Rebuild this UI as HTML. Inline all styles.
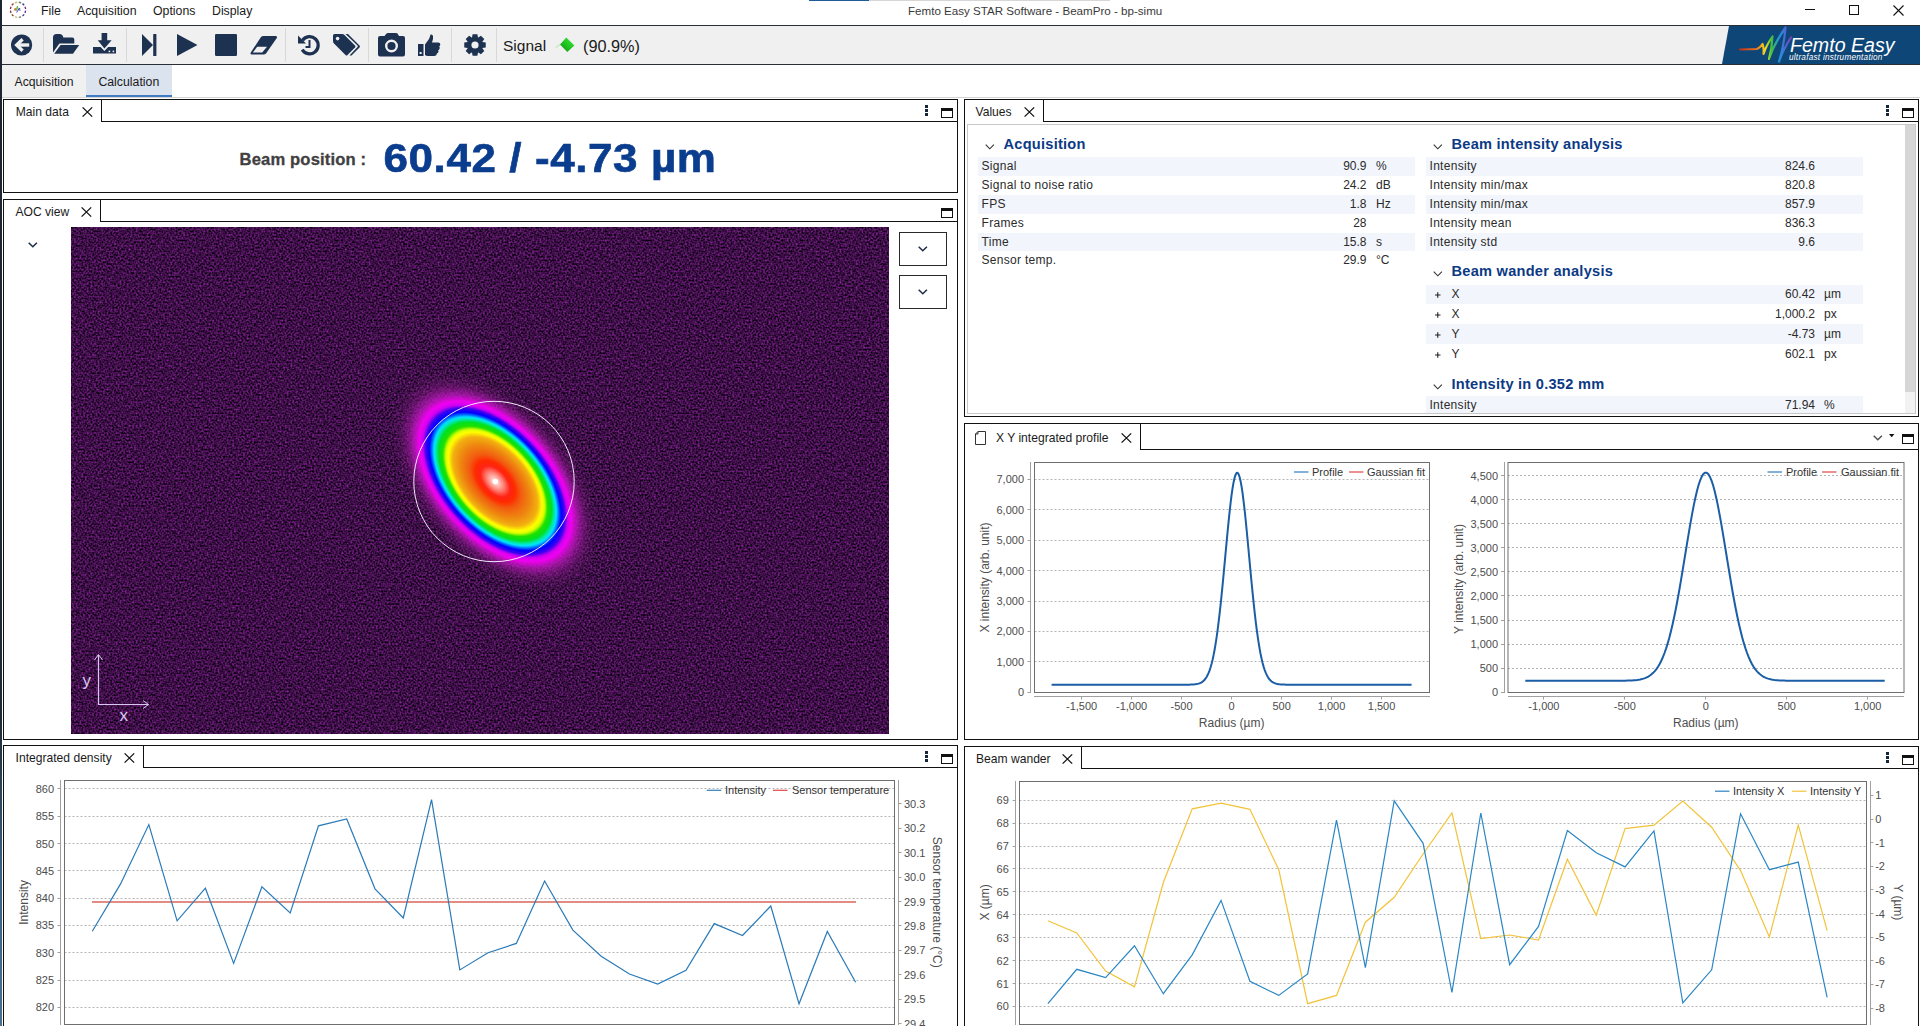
<!DOCTYPE html>
<html><head><meta charset="utf-8"><title>Femto Easy STAR Software - BeamPro</title>
<style>
html,body{margin:0;padding:0;}
body{width:1920px;height:1026px;overflow:hidden;position:relative;background:#fff;font-family:"Liberation Sans", sans-serif;}
.t{position:absolute;white-space:pre;line-height:1;}
.r{position:absolute;}
svg{position:absolute;overflow:visible;}
</style></head><body>

<div class="r" style="left:809px;top:0px;width:60px;height:1px;background:#1f5b98;"></div>
<div class="r" style="left:869px;top:0px;width:241px;height:1px;background:#d6d6d6;"></div>
<svg style="left:8px;top:0px" width="20" height="20" viewBox="0 0 20 20"><path d="M17.56 10.59 A7.6 7.6 0 0 1 16.94 12.89" stroke="#5a2d82" stroke-width="1.3" fill="none"/><path d="M16.15 14.27 A7.6 7.6 0 0 1 14.47 15.95" stroke="#4a3a8a" stroke-width="1.3" fill="none"/><path d="M13.09 16.74 A7.6 7.6 0 0 1 10.79 17.36" stroke="#5a8070" stroke-width="1.3" fill="none"/><path d="M9.21 17.36 A7.6 7.6 0 0 1 6.91 16.74" stroke="#c8b870" stroke-width="1.3" fill="none"/><path d="M5.53 15.95 A7.6 7.6 0 0 1 3.85 14.27" stroke="#8a4a30" stroke-width="1.3" fill="none"/><path d="M3.06 12.89 A7.6 7.6 0 0 1 2.44 10.59" stroke="#8a2a2a" stroke-width="1.3" fill="none"/><path d="M2.44 9.01 A7.6 7.6 0 0 1 3.06 6.71" stroke="#8a2a2a" stroke-width="1.3" fill="none"/><path d="M3.85 5.33 A7.6 7.6 0 0 1 5.53 3.65" stroke="#8a4a30" stroke-width="1.3" fill="none"/><path d="M6.91 2.86 A7.6 7.6 0 0 1 9.21 2.24" stroke="#c8b870" stroke-width="1.3" fill="none"/><path d="M10.79 2.24 A7.6 7.6 0 0 1 13.09 2.86" stroke="#5a8070" stroke-width="1.3" fill="none"/><path d="M14.47 3.65 A7.6 7.6 0 0 1 16.15 5.33" stroke="#4a3a8a" stroke-width="1.3" fill="none"/><path d="M16.94 6.71 A7.6 7.6 0 0 1 17.56 9.01" stroke="#5a2d82" stroke-width="1.3" fill="none"/><path d="M6.2 10.5 L7.2 8.2 L8 10.8" fill="none" stroke="#c07828" stroke-width="1"/><path d="M8 10.8 L9.4 6.2 L10.2 10" fill="none" stroke="#60b040" stroke-width="1"/><path d="M8.6 12.5 L10.2 10 L11.5 8 L12 10.8" fill="none" stroke="#5040b0" stroke-width="1"/></svg>
<div class="t" style="left:41px;top:4.59px;font-size:12.3px;color:#1a1a1a;font-weight:normal;">File</div>
<div class="t" style="left:77px;top:4.59px;font-size:12.3px;color:#1a1a1a;font-weight:normal;">Acquisition</div>
<div class="t" style="left:153px;top:4.59px;font-size:12.3px;color:#1a1a1a;font-weight:normal;">Options</div>
<div class="t" style="left:212px;top:4.59px;font-size:12.3px;color:#1a1a1a;font-weight:normal;">Display</div>
<div class="t" style="left:908px;top:5.18px;font-size:11.6px;color:#3a3a3a;font-weight:normal;">Femto Easy STAR Software - BeamPro - bp-simu</div>
<div class="r" style="left:1805px;top:9px;width:10px;height:1px;background:#111;"></div>
<div class="r" style="left:1849px;top:5px;width:8px;height:8px;background:transparent;border:1px solid #111;"></div>
<svg style="left:1893px;top:5px" width="11" height="11" viewBox="0 0 11 11"><path d="M0.5 0.5 L10.5 10.5 M10.5 0.5 L0.5 10.5" stroke="#111" stroke-width="1.1"/></svg>
<div class="r" style="left:2px;top:25px;width:1918px;height:1px;background:#2a2f36;"></div>
<div class="r" style="left:2px;top:26px;width:1918px;height:38px;background:#f0f0f0;"></div>
<div class="r" style="left:2px;top:64px;width:1918px;height:1px;background:#2a2f36;"></div>
<div class="r" style="left:43px;top:28px;width:1px;height:34px;background:#d8d8d8;"></div>
<div class="r" style="left:126px;top:28px;width:1px;height:34px;background:#d8d8d8;"></div>
<div class="r" style="left:285px;top:28px;width:1px;height:34px;background:#d8d8d8;"></div>
<div class="r" style="left:368px;top:28px;width:1px;height:34px;background:#d8d8d8;"></div>
<div class="r" style="left:451px;top:28px;width:1px;height:34px;background:#d8d8d8;"></div>
<div class="r" style="left:496px;top:28px;width:1px;height:34px;background:#d8d8d8;"></div>
<svg style="left:11px;top:34px" width="22" height="22" viewBox="0 0 22 22"><circle cx="10.6" cy="11" r="10.6" fill="#1d3150"/><path d="M11.6 5.2 L5.6 11 L11.6 16.8" fill="none" stroke="#f0f0f0" stroke-width="3.3" stroke-linejoin="miter"/><path d="M7.5 11 L18.2 11" stroke="#f0f0f0" stroke-width="3.4"/></svg>
<svg style="left:53px;top:34px" width="27" height="21" viewBox="0 0 27 21"><path d="M0 3.5 Q0 0 3.5 0 L6.5 0 Q9.8 0 10.3 3.6 L19.3 3.6 Q21.3 3.6 21.3 5.6 L21.3 9.6 L6.4 9.6 L0 18.6 Z" fill="#1d3150"/><path d="M7.6 11 L26.2 11 L20 19.8 L1.2 19.8 Z" fill="#1d3150"/></svg>
<svg style="left:93px;top:33px" width="24" height="22" viewBox="0 0 24 22"><path d="M8.6 0 L14.2 0 L14.2 7.2 L18.6 7.2 L11.4 15.6 L4.8 7.2 L8.6 7.2 Z" fill="#1d3150"/><path d="M0 14 L7.6 14 L11.4 18 L15.2 14 L23 14 L23 20.6 L0 20.6 Z" fill="#1d3150"/><rect x="15.6" y="17.6" width="1.6" height="1.6" fill="#f0f0f0"/><rect x="19.6" y="17.6" width="1.6" height="1.6" fill="#f0f0f0"/></svg>
<svg style="left:142px;top:34px" width="15" height="22" viewBox="0 0 15 22"><path d="M0 0 L11 11 L0 22 Z" fill="#1d3150"/><rect x="11.2" y="0" width="3.2" height="22" rx="0.6" fill="#1d3150"/></svg>
<svg style="left:177px;top:34px" width="21" height="22" viewBox="0 0 21 22"><path d="M0 0 L20.5 11 L0 22 Z" fill="#1d3150"/></svg>
<svg style="left:215px;top:34px" width="22" height="22" viewBox="0 0 22 22"><rect x="0" y="0" width="22" height="22" rx="1.2" fill="#1d3150"/></svg>
<svg style="left:250px;top:36px" width="28" height="19" viewBox="0 0 28 19"><path d="M11 1 Q12 0 13.5 0 L26 0 Q27.5 0.5 26.8 2 L16 17.5 Q15 18.5 13.5 18.5 L1.5 18.5 Q0 18 0.8 16.5 Z" fill="#1d3150"/><path d="M7.2 10.8 L17 10.8 L12.2 16.6 L2.8 16.6 Z" fill="#f0f0f0"/></svg>
<svg style="left:298px;top:34px" width="22" height="22" viewBox="0 0 22 22"><path d="M4.6 6.2 A8.6 8.6 0 1 1 4.2 15.6" fill="none" stroke="#1d3150" stroke-width="3.2"/><path d="M0 1.5 L0 9.5 L8 9.5 Z" fill="#1d3150"/><path d="M11.5 6 L11.5 13 L7.5 13" fill="none" stroke="#1d3150" stroke-width="2"/></svg>
<svg style="left:333px;top:34px" width="28" height="22" viewBox="0 0 28 22"><path d="M0 1.5 Q0 0 1.5 0 L9 0 Q10.5 0 11.5 1 L22 11.5 Q23 12.5 22 13.5 L14.5 21 Q13.5 22 12.5 21 L1 9.5 Q0 8.5 0 7 Z" fill="#1d3150"/><circle cx="4.6" cy="4.6" r="1.8" fill="#f0f0f0"/><path d="M12.5 0 L15 0 L26.5 11.5 Q27.5 12.5 26.5 13.5 L18.5 21.5 L16.5 21.5 L24.5 13 Q25.3 12.3 24.5 11.5 Z" fill="#1d3150"/></svg>
<svg style="left:378px;top:33px" width="28" height="24" viewBox="0 0 28 24"><path d="M8.5 0.5 Q9 0 10 0 L18 0 Q19 0 19.5 0.5 L21 3 L25 3 Q27 3 27 5 L27 21.5 Q27 23.5 25 23.5 L2 23.5 Q0 23.5 0 21.5 L0 5 Q0 3 2 3 L6.5 3 Z" fill="#1d3150"/><circle cx="13.5" cy="13" r="5.3" fill="none" stroke="#f0f0f0" stroke-width="2.4"/></svg>
<svg style="left:418px;top:34px" width="23" height="22" viewBox="0 0 23 22"><rect x="0" y="10" width="5.5" height="12" fill="#1d3150"/><rect x="1.6" y="18" width="2" height="2" fill="#f0f0f0"/><path d="M7 10.5 L11 5 Q12 2.5 12.5 0.5 Q14.5 0 15 2 Q15.5 4.5 14 8.5 L20.5 8.5 Q22.5 8.8 22.3 10.8 Q22 12 21.2 12.5 Q22.3 13.5 21.5 15 Q21 15.8 20.2 16.2 Q21 17.5 20 18.8 Q19.4 19.4 18.8 19.6 Q19 21.8 16.5 22 L10 22 Q8 22 7 21 Z" fill="#1d3150"/></svg>
<svg style="left:464px;top:34px" width="22" height="22" viewBox="0 0 22 22"><path d="M21.73 8.60 L21.73 13.40 L18.18 14.04 L18.23 13.93 L20.29 16.89 L16.89 20.29 L13.93 18.23 L14.04 18.18 L13.40 21.73 L8.60 21.73 L7.96 18.18 L8.07 18.23 L5.11 20.29 L1.71 16.89 L3.77 13.93 L3.82 14.04 L0.27 13.40 L0.27 8.60 L3.82 7.96 L3.77 8.07 L1.71 5.11 L5.11 1.71 L8.07 3.77 L7.96 3.82 L8.60 0.27 L13.40 0.27 L14.04 3.82 L13.93 3.77 L16.89 1.71 L20.29 5.11 L18.23 8.07 L18.18 7.96 Z" fill="#1d3150"/><circle cx="11" cy="11" r="3.6" fill="#f0f0f0"/></svg>
<div class="t" style="left:503px;top:38.18px;font-size:15.5px;color:#1a1a1a;font-weight:normal;">Signal</div>
<svg style="left:554px;top:36px" width="24" height="18" viewBox="0 0 24 18"><defs><linearGradient id="dg" x1="0" y1="1" x2="1" y2="0"><stop offset="0" stop-color="#168a16"/><stop offset="0.55" stop-color="#22cc22"/><stop offset="1" stop-color="#4ae04a"/></linearGradient></defs><path d="M1.8 11.6 L6 8.4" stroke="#c8e8c8" stroke-width="1.4"/><path d="M12.3 1.6 L20.4 9.4 L13.3 16 L6 8.4 Z" fill="url(#dg)"/></svg>
<div class="t" style="left:583px;top:37.50px;font-size:16.3px;color:#1a1a1a;font-weight:normal;">(90.9%)</div>
<svg style="left:1722px;top:26px" width="198" height="38" viewBox="0 0 198 38"><path d="M7 0 L198 0 L198 38 L0 38 Z" fill="#0e4677"/><defs><linearGradient id="lg" x1="0" y1="0" x2="1" y2="0"><stop offset="0" stop-color="#c03020"/><stop offset="0.35" stop-color="#f08020"/><stop offset="0.5" stop-color="#f0e020"/><stop offset="0.62" stop-color="#40c040"/><stop offset="0.78" stop-color="#2090e0"/><stop offset="1" stop-color="#8040c0"/></linearGradient></defs><path d="M18 23.5 L35 23 Q38 22 40.5 18 Q42 22 41.5 28 Q44 20 50.5 10.5 Q50 22 47 33 Q52 18 63.5 1.5 Q62 20 57 35.5 Q62 22 69 11.5" fill="none" stroke="url(#lg)" stroke-width="2.2" stroke-linejoin="round" stroke-linecap="round"/></svg>
<div class="t" style="left:1790px;top:36.41px;font-size:19.6px;color:#ffffff;font-weight:normal;font-style:italic;letter-spacing:0px;">Femto Easy</div>
<div class="t" style="left:1789px;top:54.36px;font-size:8.2px;color:#ffffff;font-weight:normal;font-style:italic;letter-spacing:0.25px;">ultrafast instrumentation</div>
<div class="r" style="left:2px;top:65px;width:84px;height:32px;background:#f0f0f0;"></div>
<div class="r" style="left:86px;top:65px;width:86px;height:30px;background:#dae3ee;"></div>
<div class="r" style="left:86px;top:95px;width:86px;height:2.5px;background:#3f7bc0;"></div>
<div class="r" style="left:2px;top:97px;width:1918px;height:1px;background:#d4d4d4;"></div>
<div class="t" style="left:14.6px;top:75.97px;font-size:12.2px;color:#1a1a1a;font-weight:normal;">Acquisition</div>
<div class="t" style="left:98.4px;top:75.89px;font-size:12.3px;color:#1a1a1a;font-weight:normal;">Calculation</div>
<div class="r" style="left:0px;top:0px;width:2px;height:1026px;background:linear-gradient(#1c2631 0%, #1f2b36 70%, #3a6283 85%, #4a7090 100%);"></div>
<div class="r" style="left:3px;top:99px;width:953px;height:92px;border:1px solid #111;background:#fff;"></div>
<div class="r" style="left:101px;top:121px;width:856px;height:1px;background:#111;"></div>
<div class="r" style="left:101px;top:99px;width:1px;height:23px;background:#111;"></div>
<div class="t" style="left:15.8px;top:105.76px;font-size:12.1px;color:#1a1a1a;font-weight:normal;">Main data</div>
<svg style="left:82px;top:107.0px" width="11" height="10" viewBox="0 0 11 10"><path d="M0.6 0.4 L10.2 9.6 M10.2 0.4 L0.6 9.6" stroke="#111" stroke-width="1.3"/></svg>
<div class="r" style="left:925px;top:105px;width:3px;height:3px;background:#15253a;"></div>
<div class="r" style="left:925px;top:109px;width:3px;height:3px;background:#15253a;"></div>
<div class="r" style="left:925px;top:113px;width:3px;height:3px;background:#15253a;"></div>
<div class="r" style="left:941px;top:108.0px;width:10px;height:6px;border:1px solid #111;border-top:3px solid #111;"></div>
<div class="t" style="left:239.5px;top:151.55px;font-size:16.6px;color:#404040;font-weight:bold;letter-spacing:0.15px;-webkit-text-stroke:0.3px #404040;">Beam position :</div>
<div class="t" style="left:383.5px;top:138.06px;font-size:44px;color:#0b3d8e;font-weight:bold;letter-spacing:0.58px;transform:scale(1,0.906);transform-origin:0 0;-webkit-text-stroke:0.7px #0b3d8e;">60.42 / -4.73 µm</div>
<div class="r" style="left:3px;top:199px;width:953px;height:539px;border:1px solid #111;background:#fff;"></div>
<div class="r" style="left:100px;top:221px;width:857px;height:1px;background:#111;"></div>
<div class="r" style="left:100px;top:199px;width:1px;height:23px;background:#111;"></div>
<div class="t" style="left:15.5px;top:205.76px;font-size:12.1px;color:#1a1a1a;font-weight:normal;">AOC view</div>
<svg style="left:81px;top:207.0px" width="11" height="10" viewBox="0 0 11 10"><path d="M0.6 0.4 L10.2 9.6 M10.2 0.4 L0.6 9.6" stroke="#111" stroke-width="1.3"/></svg>
<div class="r" style="left:941px;top:208.0px;width:10px;height:6px;border:1px solid #111;border-top:3px solid #111;"></div>
<div class="r" style="left:3px;top:745px;width:953px;height:284px;border:1px solid #111;background:#fff;"></div>
<div class="r" style="left:143px;top:767px;width:814px;height:1px;background:#111;"></div>
<div class="r" style="left:143px;top:745px;width:1px;height:23px;background:#111;"></div>
<div class="t" style="left:15.6px;top:751.76px;font-size:12.1px;color:#1a1a1a;font-weight:normal;">Integrated density</div>
<svg style="left:124px;top:753.0px" width="11" height="10" viewBox="0 0 11 10"><path d="M0.6 0.4 L10.2 9.6 M10.2 0.4 L0.6 9.6" stroke="#111" stroke-width="1.3"/></svg>
<div class="r" style="left:925px;top:751px;width:3px;height:3px;background:#15253a;"></div>
<div class="r" style="left:925px;top:755px;width:3px;height:3px;background:#15253a;"></div>
<div class="r" style="left:925px;top:759px;width:3px;height:3px;background:#15253a;"></div>
<div class="r" style="left:941px;top:754.0px;width:10px;height:6px;border:1px solid #111;border-top:3px solid #111;"></div>
<div class="r" style="left:964px;top:99px;width:953px;height:316px;border:1px solid #111;background:#fff;"></div>
<div class="r" style="left:1043px;top:121px;width:875px;height:1px;background:#111;"></div>
<div class="r" style="left:1043px;top:99px;width:1px;height:23px;background:#111;"></div>
<div class="t" style="left:975.5px;top:105.76px;font-size:12.1px;color:#1a1a1a;font-weight:normal;">Values</div>
<svg style="left:1024px;top:107.0px" width="11" height="10" viewBox="0 0 11 10"><path d="M0.6 0.4 L10.2 9.6 M10.2 0.4 L0.6 9.6" stroke="#111" stroke-width="1.3"/></svg>
<div class="r" style="left:1886px;top:105px;width:3px;height:3px;background:#15253a;"></div>
<div class="r" style="left:1886px;top:109px;width:3px;height:3px;background:#15253a;"></div>
<div class="r" style="left:1886px;top:113px;width:3px;height:3px;background:#15253a;"></div>
<div class="r" style="left:1902px;top:108.0px;width:10px;height:6px;border:1px solid #111;border-top:3px solid #111;"></div>
<div class="r" style="left:964px;top:423px;width:953px;height:315px;border:1px solid #111;background:#fff;"></div>
<div class="r" style="left:1140px;top:449px;width:778px;height:1px;background:#111;"></div>
<div class="r" style="left:1140px;top:423px;width:1px;height:27px;background:#111;"></div>
<div class="t" style="left:996px;top:432.26px;font-size:12.1px;color:#1a1a1a;font-weight:normal;">X Y integrated profile</div>
<svg style="left:1121px;top:433.0px" width="11" height="10" viewBox="0 0 11 10"><path d="M0.6 0.4 L10.2 9.6 M10.2 0.4 L0.6 9.6" stroke="#111" stroke-width="1.3"/></svg>
<div class="r" style="left:1902px;top:434.0px;width:10px;height:6px;border:1px solid #111;border-top:3px solid #111;"></div>
<div class="r" style="left:964px;top:746px;width:953px;height:283px;border:1px solid #111;background:#fff;"></div>
<div class="r" style="left:1081px;top:768px;width:837px;height:1px;background:#111;"></div>
<div class="r" style="left:1081px;top:746px;width:1px;height:23px;background:#111;"></div>
<div class="t" style="left:976px;top:752.76px;font-size:12.1px;color:#1a1a1a;font-weight:normal;">Beam wander</div>
<svg style="left:1062px;top:754.0px" width="11" height="10" viewBox="0 0 11 10"><path d="M0.6 0.4 L10.2 9.6 M10.2 0.4 L0.6 9.6" stroke="#111" stroke-width="1.3"/></svg>
<div class="r" style="left:1886px;top:752px;width:3px;height:3px;background:#15253a;"></div>
<div class="r" style="left:1886px;top:756px;width:3px;height:3px;background:#15253a;"></div>
<div class="r" style="left:1886px;top:760px;width:3px;height:3px;background:#15253a;"></div>
<div class="r" style="left:1902px;top:755.0px;width:10px;height:6px;border:1px solid #111;border-top:3px solid #111;"></div>
<div class="r" style="left:967px;top:124px;width:949px;height:1px;background:#c8c8c8;"></div>
<div class="r" style="left:967px;top:124px;width:1px;height:290px;background:#c8c8c8;"></div>
<div class="r" style="left:967px;top:413px;width:949px;height:1px;background:#c8c8c8;"></div>
<div class="r" style="left:1905px;top:125px;width:10px;height:267px;background:#d6d6d6;"></div>
<div class="r" style="left:1905px;top:392px;width:10px;height:21px;background:#f2f2f2;"></div>
<div class="r" style="left:1915px;top:124px;width:1px;height:290px;background:#c8c8c8;"></div>
<svg style="left:984.5px;top:144.3px" width="11" height="7" viewBox="0 0 11 7"><path d="M0.7 0.7 L4.8 4.8 L8.9 0.7" fill="none" stroke="#333" stroke-width="1.1"/></svg>
<div class="t" style="left:1003.5px;top:137.44px;font-size:14.6px;color:#0c3a85;font-weight:bold;letter-spacing:0.25px;">Acquisition</div>
<div class="r" style="left:978px;top:157.0px;width:437px;height:18.9px;background:#f2f5fb;"></div>
<div class="t" style="left:981.5px;top:159.99px;font-size:12px;color:#2b2b2b;font-weight:normal;letter-spacing:0.3px;">Signal</div>
<div class="t" style="left:1266.5px;width:100px;text-align:right;top:159.99px;font-size:12px;color:#2b2b2b">90.9</div>
<div class="t" style="left:1376px;top:159.99px;font-size:12px;color:#2b2b2b;font-weight:normal;">%</div>
<div class="t" style="left:981.5px;top:178.89px;font-size:12px;color:#2b2b2b;font-weight:normal;letter-spacing:0.3px;">Signal to noise ratio</div>
<div class="t" style="left:1266.5px;width:100px;text-align:right;top:178.89px;font-size:12px;color:#2b2b2b">24.2</div>
<div class="t" style="left:1376px;top:178.89px;font-size:12px;color:#2b2b2b;font-weight:normal;">dB</div>
<div class="r" style="left:978px;top:194.8px;width:437px;height:18.9px;background:#f2f5fb;"></div>
<div class="t" style="left:981.5px;top:197.79px;font-size:12px;color:#2b2b2b;font-weight:normal;letter-spacing:0.3px;">FPS</div>
<div class="t" style="left:1266.5px;width:100px;text-align:right;top:197.79px;font-size:12px;color:#2b2b2b">1.8</div>
<div class="t" style="left:1376px;top:197.79px;font-size:12px;color:#2b2b2b;font-weight:normal;">Hz</div>
<div class="t" style="left:981.5px;top:216.69px;font-size:12px;color:#2b2b2b;font-weight:normal;letter-spacing:0.3px;">Frames</div>
<div class="t" style="left:1266.5px;width:100px;text-align:right;top:216.69px;font-size:12px;color:#2b2b2b">28</div>
<div class="r" style="left:978px;top:232.6px;width:437px;height:18.9px;background:#f2f5fb;"></div>
<div class="t" style="left:981.5px;top:235.59px;font-size:12px;color:#2b2b2b;font-weight:normal;letter-spacing:0.3px;">Time</div>
<div class="t" style="left:1266.5px;width:100px;text-align:right;top:235.59px;font-size:12px;color:#2b2b2b">15.8</div>
<div class="t" style="left:1376px;top:235.59px;font-size:12px;color:#2b2b2b;font-weight:normal;">s</div>
<div class="t" style="left:981.5px;top:254.49px;font-size:12px;color:#2b2b2b;font-weight:normal;letter-spacing:0.3px;">Sensor temp.</div>
<div class="t" style="left:1266.5px;width:100px;text-align:right;top:254.49px;font-size:12px;color:#2b2b2b">29.9</div>
<div class="t" style="left:1376px;top:254.49px;font-size:12px;color:#2b2b2b;font-weight:normal;">°C</div>
<svg style="left:1432.5px;top:144.3px" width="11" height="7" viewBox="0 0 11 7"><path d="M0.7 0.7 L4.8 4.8 L8.9 0.7" fill="none" stroke="#333" stroke-width="1.1"/></svg>
<div class="t" style="left:1451.5px;top:137.44px;font-size:14.6px;color:#0c3a85;font-weight:bold;letter-spacing:0.25px;">Beam intensity analysis</div>
<div class="r" style="left:1426px;top:157.0px;width:437px;height:18.9px;background:#f2f5fb;"></div>
<div class="t" style="left:1429.5px;top:159.99px;font-size:12px;color:#2b2b2b;font-weight:normal;letter-spacing:0.3px;">Intensity</div>
<div class="t" style="left:1715px;width:100px;text-align:right;top:159.99px;font-size:12px;color:#2b2b2b">824.6</div>
<div class="t" style="left:1429.5px;top:178.89px;font-size:12px;color:#2b2b2b;font-weight:normal;letter-spacing:0.3px;">Intensity min/max</div>
<div class="t" style="left:1715px;width:100px;text-align:right;top:178.89px;font-size:12px;color:#2b2b2b">820.8</div>
<div class="r" style="left:1426px;top:194.8px;width:437px;height:18.9px;background:#f2f5fb;"></div>
<div class="t" style="left:1429.5px;top:197.79px;font-size:12px;color:#2b2b2b;font-weight:normal;letter-spacing:0.3px;">Intensity min/max</div>
<div class="t" style="left:1715px;width:100px;text-align:right;top:197.79px;font-size:12px;color:#2b2b2b">857.9</div>
<div class="t" style="left:1429.5px;top:216.69px;font-size:12px;color:#2b2b2b;font-weight:normal;letter-spacing:0.3px;">Intensity mean</div>
<div class="t" style="left:1715px;width:100px;text-align:right;top:216.69px;font-size:12px;color:#2b2b2b">836.3</div>
<div class="r" style="left:1426px;top:232.6px;width:437px;height:18.9px;background:#f2f5fb;"></div>
<div class="t" style="left:1429.5px;top:235.59px;font-size:12px;color:#2b2b2b;font-weight:normal;letter-spacing:0.3px;">Intensity std</div>
<div class="t" style="left:1715px;width:100px;text-align:right;top:235.59px;font-size:12px;color:#2b2b2b">9.6</div>
<svg style="left:1432.5px;top:271.3px" width="11" height="7" viewBox="0 0 11 7"><path d="M0.7 0.7 L4.8 4.8 L8.9 0.7" fill="none" stroke="#333" stroke-width="1.1"/></svg>
<div class="t" style="left:1451.5px;top:264.44px;font-size:14.6px;color:#0c3a85;font-weight:bold;letter-spacing:0.25px;">Beam wander analysis</div>
<div class="r" style="left:1426px;top:284.6px;width:437px;height:19.9px;background:#f2f5fb;"></div>
<svg style="left:1435px;top:292.05px" width="6" height="6" viewBox="0 0 6 6"><path d="M0 3 L5.5 3 M2.75 0.2 L2.75 5.8" stroke="#222" stroke-width="1.1"/></svg>
<div class="t" style="left:1451.5px;top:288.09px;font-size:12px;color:#2b2b2b;font-weight:normal;letter-spacing:0.3px;">X</div>
<div class="t" style="left:1715px;width:100px;text-align:right;top:288.09px;font-size:12px;color:#2b2b2b">60.42</div>
<div class="t" style="left:1824px;top:288.09px;font-size:12px;color:#2b2b2b;font-weight:normal;">µm</div>
<svg style="left:1435px;top:311.95px" width="6" height="6" viewBox="0 0 6 6"><path d="M0 3 L5.5 3 M2.75 0.2 L2.75 5.8" stroke="#222" stroke-width="1.1"/></svg>
<div class="t" style="left:1451.5px;top:307.99px;font-size:12px;color:#2b2b2b;font-weight:normal;letter-spacing:0.3px;">X</div>
<div class="t" style="left:1715px;width:100px;text-align:right;top:307.99px;font-size:12px;color:#2b2b2b">1,000.2</div>
<div class="t" style="left:1824px;top:307.99px;font-size:12px;color:#2b2b2b;font-weight:normal;">px</div>
<div class="r" style="left:1426px;top:324.40000000000003px;width:437px;height:19.9px;background:#f2f5fb;"></div>
<svg style="left:1435px;top:331.85px" width="6" height="6" viewBox="0 0 6 6"><path d="M0 3 L5.5 3 M2.75 0.2 L2.75 5.8" stroke="#222" stroke-width="1.1"/></svg>
<div class="t" style="left:1451.5px;top:327.89px;font-size:12px;color:#2b2b2b;font-weight:normal;letter-spacing:0.3px;">Y</div>
<div class="t" style="left:1715px;width:100px;text-align:right;top:327.89px;font-size:12px;color:#2b2b2b">-4.73</div>
<div class="t" style="left:1824px;top:327.89px;font-size:12px;color:#2b2b2b;font-weight:normal;">µm</div>
<svg style="left:1435px;top:351.75px" width="6" height="6" viewBox="0 0 6 6"><path d="M0 3 L5.5 3 M2.75 0.2 L2.75 5.8" stroke="#222" stroke-width="1.1"/></svg>
<div class="t" style="left:1451.5px;top:347.79px;font-size:12px;color:#2b2b2b;font-weight:normal;letter-spacing:0.3px;">Y</div>
<div class="t" style="left:1715px;width:100px;text-align:right;top:347.79px;font-size:12px;color:#2b2b2b">602.1</div>
<div class="t" style="left:1824px;top:347.79px;font-size:12px;color:#2b2b2b;font-weight:normal;">px</div>
<svg style="left:1432.5px;top:383.7px" width="11" height="7" viewBox="0 0 11 7"><path d="M0.7 0.7 L4.8 4.8 L8.9 0.7" fill="none" stroke="#333" stroke-width="1.1"/></svg>
<div class="t" style="left:1451.5px;top:376.84px;font-size:14.6px;color:#0c3a85;font-weight:bold;letter-spacing:0.25px;">Intensity in 0.352 mm</div>
<div class="r" style="left:1426px;top:396px;width:437px;height:17px;background:#f2f5fb;"></div>
<div class="t" style="left:1429.4px;top:398.54px;font-size:12px;color:#2b2b2b;font-weight:normal;letter-spacing:0.3px;">Intensity</div>
<div class="t" style="left:1715px;width:100px;text-align:right;top:398.54px;font-size:12px;color:#2b2b2b">71.94</div>
<div class="t" style="left:1824px;top:398.54px;font-size:12px;color:#2b2b2b;font-weight:normal;">%</div>
<svg style="left:28.2px;top:242.3px" width="11" height="7" viewBox="0 0 11 7"><path d="M0.7 0.7 L4.8 4.8 L8.9 0.7" fill="none" stroke="#1d2d45" stroke-width="1.5"/></svg>
<div class="r" style="left:899px;top:232px;width:46px;height:32px;border:1px solid #2a2a2a;background:#fff;"></div>
<svg style="left:918.3px;top:246.3px" width="11" height="7" viewBox="0 0 11 7"><path d="M0.7 0.7 L4.8 4.8 L8.9 0.7" fill="none" stroke="#1d2d45" stroke-width="1.5"/></svg>
<div class="r" style="left:899px;top:275px;width:46px;height:32px;border:1px solid #2a2a2a;background:#fff;"></div>
<svg style="left:918.3px;top:289.3px" width="11" height="7" viewBox="0 0 11 7"><path d="M0.7 0.7 L4.8 4.8 L8.9 0.7" fill="none" stroke="#1d2d45" stroke-width="1.5"/></svg>
<svg style="left:71px;top:227px" width="818" height="507" viewBox="71 227 818 507">
<defs><filter id="nz" x="71" y="227" width="818" height="507" filterUnits="userSpaceOnUse" color-interpolation-filters="sRGB"><feTurbulence type="fractalNoise" baseFrequency="0.55" numOctaves="1" seed="7" result="n"/><feColorMatrix in="n" type="matrix" values="0.954 0 0 0 -0.2336  0.267 0 0 0 -0.0747  1.031 0 0 0 -0.2325  0 0 0 0 1"/></filter><radialGradient id="beam" cx="0.5" cy="0.5" r="0.5"><stop offset="0.0000" stop-color="#ffe4dc" stop-opacity="1"/><stop offset="0.0333" stop-color="#ffc4bc" stop-opacity="1"/><stop offset="0.0867" stop-color="#ff7a70" stop-opacity="1"/><stop offset="0.1400" stop-color="#ff2414" stop-opacity="1"/><stop offset="0.1867" stop-color="#ff2a00" stop-opacity="1"/><stop offset="0.2400" stop-color="#f25a10" stop-opacity="1"/><stop offset="0.3333" stop-color="#ee8a10" stop-opacity="1"/><stop offset="0.4000" stop-color="#f2b010" stop-opacity="1"/><stop offset="0.4433" stop-color="#ffff00" stop-opacity="1"/><stop offset="0.4667" stop-color="#d8ff00" stop-opacity="1"/><stop offset="0.4967" stop-color="#20e000" stop-opacity="1"/><stop offset="0.5333" stop-color="#00e020" stop-opacity="1"/><stop offset="0.5633" stop-color="#00e8c0" stop-opacity="1"/><stop offset="0.5800" stop-color="#00e0ff" stop-opacity="1"/><stop offset="0.6000" stop-color="#0070ff" stop-opacity="1"/><stop offset="0.6233" stop-color="#0000ff" stop-opacity="1"/><stop offset="0.6567" stop-color="#3a00f0" stop-opacity="1"/><stop offset="0.6867" stop-color="#d000f0" stop-opacity="1"/><stop offset="0.7200" stop-color="#f000f0" stop-opacity="1"/><stop offset="0.7800" stop-color="#c018c0" stop-opacity="0.75"/><stop offset="0.8800" stop-color="#801a80" stop-opacity="0.35"/><stop offset="1.0000" stop-color="#501850" stop-opacity="0"/></radialGradient></defs>
<rect x="71" y="227" width="818" height="507" fill="#3e1444"/>
<rect x="71" y="227" width="818" height="507" filter="url(#nz)"/>
<ellipse cx="495.2" cy="481.4" rx="132.00" ry="78.00" transform="rotate(48 495.2 481.4)" fill="url(#beam)"/>
<circle cx="494" cy="481.5" r="80.2" fill="none" stroke="#f4e8ff" stroke-width="1"/>
<circle cx="495.3" cy="481.5" r="2.8" fill="#ffffff"/>
<path d="M98.5 655 L98.5 704.5 L148.5 704.5" fill="none" stroke="#d8c8f0" stroke-width="1.2"/>
<path d="M94.5 660 L98.5 654.5 L102.5 660 M143 700.5 L148.5 704.5 L143 708.5" fill="none" stroke="#d8c8f0" stroke-width="1"/>
<text x="82.5" y="686" font-size="17" fill="#d8c8f0" font-family="Liberation Sans, sans-serif">y</text>
<text x="119.5" y="721" font-size="17" fill="#d8c8f0" font-family="Liberation Sans, sans-serif">x</text>
</svg>
<svg style="left:974.5px;top:430.8px" width="11" height="14" viewBox="0 0 11 14"><path d="M3 0.5 L10.5 0.5 L10.5 13.5 L0.5 13.5 L0.5 3 Z M0.5 3 L3 3 L3 0.5" fill="#fff" stroke="#333" stroke-width="1"/></svg>
<svg style="left:1872.6px;top:434.5px" width="11" height="7" viewBox="0 0 11 7"><path d="M0.7 0.7 L4.8 4.8 L8.9 0.7" fill="none" stroke="#505050" stroke-width="1.4"/></svg>
<svg style="left:1888.8px;top:434px" width="6" height="4" viewBox="0 0 6 4"><path d="M0 0 L5.4 0 L2.7 3.2 Z" fill="#111"/></svg>
<svg style="left:0;top:0" width="1920" height="1026" viewBox="0 0 1920 1026" font-family="Liberation Sans, sans-serif">
<line x1="1034.5" y1="661.50" x2="1429.5" y2="661.50" stroke="#b4b4b4" stroke-width="1" stroke-dasharray="2 2"/>
<line x1="1034.5" y1="631.50" x2="1429.5" y2="631.50" stroke="#b4b4b4" stroke-width="1" stroke-dasharray="2 2"/>
<line x1="1034.5" y1="601.50" x2="1429.5" y2="601.50" stroke="#b4b4b4" stroke-width="1" stroke-dasharray="2 2"/>
<line x1="1034.5" y1="570.50" x2="1429.5" y2="570.50" stroke="#b4b4b4" stroke-width="1" stroke-dasharray="2 2"/>
<line x1="1034.5" y1="540.50" x2="1429.5" y2="540.50" stroke="#b4b4b4" stroke-width="1" stroke-dasharray="2 2"/>
<line x1="1034.5" y1="509.50" x2="1429.5" y2="509.50" stroke="#b4b4b4" stroke-width="1" stroke-dasharray="2 2"/>
<line x1="1034.5" y1="479.50" x2="1429.5" y2="479.50" stroke="#b4b4b4" stroke-width="1" stroke-dasharray="2 2"/>
<line x1="1027.5" y1="692.50" x2="1030.5" y2="692.50" stroke="#a0a0a0" stroke-width="1"/>
<text x="1024.00" y="696.30" font-size="11" fill="#4d4d4d" text-anchor="end" >0</text>
<line x1="1027.5" y1="661.50" x2="1030.5" y2="661.50" stroke="#a0a0a0" stroke-width="1"/>
<text x="1024.00" y="665.89" font-size="11" fill="#4d4d4d" text-anchor="end" >1,000</text>
<line x1="1027.5" y1="631.50" x2="1030.5" y2="631.50" stroke="#a0a0a0" stroke-width="1"/>
<text x="1024.00" y="635.47" font-size="11" fill="#4d4d4d" text-anchor="end" >2,000</text>
<line x1="1027.5" y1="601.50" x2="1030.5" y2="601.50" stroke="#a0a0a0" stroke-width="1"/>
<text x="1024.00" y="605.06" font-size="11" fill="#4d4d4d" text-anchor="end" >3,000</text>
<line x1="1027.5" y1="570.50" x2="1030.5" y2="570.50" stroke="#a0a0a0" stroke-width="1"/>
<text x="1024.00" y="574.64" font-size="11" fill="#4d4d4d" text-anchor="end" >4,000</text>
<line x1="1027.5" y1="540.50" x2="1030.5" y2="540.50" stroke="#a0a0a0" stroke-width="1"/>
<text x="1024.00" y="544.23" font-size="11" fill="#4d4d4d" text-anchor="end" >5,000</text>
<line x1="1027.5" y1="509.50" x2="1030.5" y2="509.50" stroke="#a0a0a0" stroke-width="1"/>
<text x="1024.00" y="513.82" font-size="11" fill="#4d4d4d" text-anchor="end" >6,000</text>
<line x1="1027.5" y1="479.50" x2="1030.5" y2="479.50" stroke="#a0a0a0" stroke-width="1"/>
<text x="1024.00" y="483.40" font-size="11" fill="#4d4d4d" text-anchor="end" >7,000</text>
<line x1="1030.50" y1="462" x2="1030.50" y2="693" stroke="#a0a0a0" stroke-width="1"/>
<line x1="1034" y1="696.50" x2="1430" y2="696.50" stroke="#a0a0a0" stroke-width="1"/>
<line x1="1081.50" y1="696.5" x2="1081.50" y2="699.5" stroke="#a0a0a0" stroke-width="1"/>
<text x="1081.60" y="709.70" font-size="11" fill="#4d4d4d" text-anchor="middle" >-1,500</text>
<line x1="1131.50" y1="696.5" x2="1131.50" y2="699.5" stroke="#a0a0a0" stroke-width="1"/>
<text x="1131.60" y="709.70" font-size="11" fill="#4d4d4d" text-anchor="middle" >-1,000</text>
<line x1="1181.50" y1="696.5" x2="1181.50" y2="699.5" stroke="#a0a0a0" stroke-width="1"/>
<text x="1181.60" y="709.70" font-size="11" fill="#4d4d4d" text-anchor="middle" >-500</text>
<line x1="1231.50" y1="696.5" x2="1231.50" y2="699.5" stroke="#a0a0a0" stroke-width="1"/>
<text x="1231.60" y="709.70" font-size="11" fill="#4d4d4d" text-anchor="middle" >0</text>
<line x1="1281.50" y1="696.5" x2="1281.50" y2="699.5" stroke="#a0a0a0" stroke-width="1"/>
<text x="1281.60" y="709.70" font-size="11" fill="#4d4d4d" text-anchor="middle" >500</text>
<line x1="1331.50" y1="696.5" x2="1331.50" y2="699.5" stroke="#a0a0a0" stroke-width="1"/>
<text x="1331.60" y="709.70" font-size="11" fill="#4d4d4d" text-anchor="middle" >1,000</text>
<line x1="1381.50" y1="696.5" x2="1381.50" y2="699.5" stroke="#a0a0a0" stroke-width="1"/>
<text x="1381.60" y="709.70" font-size="11" fill="#4d4d4d" text-anchor="middle" >1,500</text>
<rect x="1034.5" y="462.5" width="395.0" height="230.0" fill="none" stroke="#6e6e6e" stroke-width="1"/>
<polyline points="1051.60,684.70 1052.60,684.70 1053.60,684.70 1054.60,684.70 1055.60,684.70 1056.60,684.70 1057.60,684.70 1058.60,684.70 1059.60,684.70 1060.60,684.70 1061.60,684.70 1062.60,684.70 1063.60,684.70 1064.60,684.70 1065.60,684.70 1066.60,684.70 1067.60,684.70 1068.60,684.70 1069.60,684.70 1070.60,684.70 1071.60,684.70 1072.60,684.70 1073.60,684.70 1074.60,684.70 1075.60,684.70 1076.60,684.70 1077.60,684.70 1078.60,684.70 1079.60,684.70 1080.60,684.70 1081.60,684.70 1082.60,684.70 1083.60,684.70 1084.60,684.70 1085.60,684.70 1086.60,684.70 1087.60,684.70 1088.60,684.70 1089.60,684.70 1090.60,684.70 1091.60,684.70 1092.60,684.70 1093.60,684.70 1094.60,684.70 1095.60,684.70 1096.60,684.70 1097.60,684.70 1098.60,684.70 1099.60,684.70 1100.60,684.70 1101.60,684.70 1102.60,684.70 1103.60,684.70 1104.60,684.70 1105.60,684.70 1106.60,684.70 1107.60,684.70 1108.60,684.70 1109.60,684.70 1110.60,684.70 1111.60,684.70 1112.60,684.70 1113.60,684.70 1114.60,684.70 1115.60,684.70 1116.60,684.70 1117.60,684.70 1118.60,684.70 1119.60,684.70 1120.60,684.70 1121.60,684.70 1122.60,684.70 1123.60,684.70 1124.60,684.70 1125.60,684.70 1126.60,684.70 1127.60,684.70 1128.60,684.70 1129.60,684.70 1130.60,684.70 1131.60,684.70 1132.60,684.70 1133.60,684.70 1134.60,684.70 1135.60,684.70 1136.60,684.70 1137.60,684.70 1138.60,684.70 1139.60,684.70 1140.60,684.70 1141.60,684.70 1142.60,684.70 1143.60,684.70 1144.60,684.70 1145.60,684.70 1146.60,684.70 1147.60,684.70 1148.60,684.70 1149.60,684.70 1150.60,684.70 1151.60,684.70 1152.60,684.70 1153.60,684.70 1154.60,684.70 1155.60,684.70 1156.60,684.70 1157.60,684.70 1158.60,684.70 1159.60,684.70 1160.60,684.70 1161.60,684.70 1162.60,684.70 1163.60,684.70 1164.60,684.70 1165.60,684.70 1166.60,684.70 1167.60,684.70 1168.60,684.70 1169.60,684.70 1170.60,684.70 1171.60,684.70 1172.60,684.70 1173.60,684.70 1174.60,684.70 1175.60,684.70 1176.60,684.70 1177.60,684.70 1178.60,684.70 1179.60,684.69 1180.60,684.69 1181.60,684.69 1182.60,684.69 1183.60,684.69 1184.60,684.68 1185.60,684.68 1186.60,684.67 1187.60,684.66 1188.60,684.65 1189.60,684.63 1190.60,684.60 1191.60,684.56 1192.60,684.51 1193.60,684.44 1194.60,684.35 1195.60,684.23 1196.60,684.07 1197.60,683.86 1198.60,683.60 1199.60,683.26 1200.60,682.82 1201.60,682.28 1202.60,681.60 1203.60,680.76 1204.60,679.72 1205.60,678.46 1206.60,676.93 1207.60,675.09 1208.60,672.89 1209.60,670.30 1210.60,667.27 1211.60,663.74 1212.60,659.67 1213.60,655.03 1214.60,649.77 1215.60,643.88 1216.60,637.32 1217.60,630.09 1218.60,622.21 1219.60,613.69 1220.60,604.57 1221.60,594.93 1222.60,584.82 1223.60,574.37 1224.60,563.68 1225.60,552.88 1226.60,542.13 1227.60,531.59 1228.60,521.43 1229.60,511.82 1230.60,502.93 1231.60,494.93 1232.60,487.97 1233.60,482.19 1234.60,477.71 1235.60,474.62 1236.60,472.98 1237.60,472.83 1238.60,474.17 1239.60,476.98 1240.60,481.19 1241.60,486.72 1242.60,493.45 1243.60,501.26 1244.60,509.98 1245.60,519.46 1246.60,529.52 1247.60,540.00 1248.60,550.72 1249.60,561.52 1250.60,572.24 1251.60,582.76 1252.60,592.94 1253.60,602.68 1254.60,611.91 1255.60,620.55 1256.60,628.57 1257.60,635.93 1258.60,642.62 1259.60,648.65 1260.60,654.03 1261.60,658.79 1262.60,662.97 1263.60,666.60 1264.60,669.73 1265.60,672.41 1266.60,674.68 1267.60,676.58 1268.60,678.17 1269.60,679.49 1270.60,680.57 1271.60,681.45 1272.60,682.16 1273.60,682.73 1274.60,683.18 1275.60,683.53 1276.60,683.81 1277.60,684.03 1278.60,684.20 1279.60,684.33 1280.60,684.42 1281.60,684.50 1282.60,684.55 1283.60,684.59 1284.60,684.62 1285.60,684.64 1286.60,684.66 1287.60,684.67 1288.60,684.68 1289.60,684.68 1290.60,684.69 1291.60,684.69 1292.60,684.69 1293.60,684.69 1294.60,684.69 1295.60,684.70 1296.60,684.70 1297.60,684.70 1298.60,684.70 1299.60,684.70 1300.60,684.70 1301.60,684.70 1302.60,684.70 1303.60,684.70 1304.60,684.70 1305.60,684.70 1306.60,684.70 1307.60,684.70 1308.60,684.70 1309.60,684.70 1310.60,684.70 1311.60,684.70 1312.60,684.70 1313.60,684.70 1314.60,684.70 1315.60,684.70 1316.60,684.70 1317.60,684.70 1318.60,684.70 1319.60,684.70 1320.60,684.70 1321.60,684.70 1322.60,684.70 1323.60,684.70 1324.60,684.70 1325.60,684.70 1326.60,684.70 1327.60,684.70 1328.60,684.70 1329.60,684.70 1330.60,684.70 1331.60,684.70 1332.60,684.70 1333.60,684.70 1334.60,684.70 1335.60,684.70 1336.60,684.70 1337.60,684.70 1338.60,684.70 1339.60,684.70 1340.60,684.70 1341.60,684.70 1342.60,684.70 1343.60,684.70 1344.60,684.70 1345.60,684.70 1346.60,684.70 1347.60,684.70 1348.60,684.70 1349.60,684.70 1350.60,684.70 1351.60,684.70 1352.60,684.70 1353.60,684.70 1354.60,684.70 1355.60,684.70 1356.60,684.70 1357.60,684.70 1358.60,684.70 1359.60,684.70 1360.60,684.70 1361.60,684.70 1362.60,684.70 1363.60,684.70 1364.60,684.70 1365.60,684.70 1366.60,684.70 1367.60,684.70 1368.60,684.70 1369.60,684.70 1370.60,684.70 1371.60,684.70 1372.60,684.70 1373.60,684.70 1374.60,684.70 1375.60,684.70 1376.60,684.70 1377.60,684.70 1378.60,684.70 1379.60,684.70 1380.60,684.70 1381.60,684.70 1382.60,684.70 1383.60,684.70 1384.60,684.70 1385.60,684.70 1386.60,684.70 1387.60,684.70 1388.60,684.70 1389.60,684.70 1390.60,684.70 1391.60,684.70 1392.60,684.70 1393.60,684.70 1394.60,684.70 1395.60,684.70 1396.60,684.70 1397.60,684.70 1398.60,684.70 1399.60,684.70 1400.60,684.70 1401.60,684.70 1402.60,684.70 1403.60,684.70 1404.60,684.70 1405.60,684.70 1406.60,684.70 1407.60,684.70 1408.60,684.70 1409.60,684.70 1410.60,684.70 1411.60,684.70" fill="none" stroke="#1b5ea6" stroke-width="2" stroke-linejoin="miter"/>
<line x1="1294" y1="472.00" x2="1308.5" y2="472.00" stroke="#2f7fc0" stroke-width="1.2"/>
<text x="1312.00" y="476.00" font-size="11" fill="#333" text-anchor="start" >Profile</text>
<line x1="1349" y1="472.00" x2="1363.5" y2="472.00" stroke="#e04848" stroke-width="1.2"/>
<text x="1367.00" y="476.00" font-size="11" fill="#333" text-anchor="start" >Gaussian fit</text>
<text x="1231.60" y="726.60" font-size="12" fill="#4d4d4d" text-anchor="middle" >Radius (µm)</text>
<text x="989.40" y="577.50" font-size="12" fill="#4d4d4d" text-anchor="middle" transform="rotate(-90 989.4 577.5)">X intensity (arb. unit)</text>
<line x1="1508" y1="668.50" x2="1904" y2="668.50" stroke="#b4b4b4" stroke-width="1" stroke-dasharray="2 2"/>
<line x1="1508" y1="644.50" x2="1904" y2="644.50" stroke="#b4b4b4" stroke-width="1" stroke-dasharray="2 2"/>
<line x1="1508" y1="620.50" x2="1904" y2="620.50" stroke="#b4b4b4" stroke-width="1" stroke-dasharray="2 2"/>
<line x1="1508" y1="595.50" x2="1904" y2="595.50" stroke="#b4b4b4" stroke-width="1" stroke-dasharray="2 2"/>
<line x1="1508" y1="571.50" x2="1904" y2="571.50" stroke="#b4b4b4" stroke-width="1" stroke-dasharray="2 2"/>
<line x1="1508" y1="547.50" x2="1904" y2="547.50" stroke="#b4b4b4" stroke-width="1" stroke-dasharray="2 2"/>
<line x1="1508" y1="523.50" x2="1904" y2="523.50" stroke="#b4b4b4" stroke-width="1" stroke-dasharray="2 2"/>
<line x1="1508" y1="499.50" x2="1904" y2="499.50" stroke="#b4b4b4" stroke-width="1" stroke-dasharray="2 2"/>
<line x1="1508" y1="475.50" x2="1904" y2="475.50" stroke="#b4b4b4" stroke-width="1" stroke-dasharray="2 2"/>
<line x1="1501" y1="692.50" x2="1504" y2="692.50" stroke="#a0a0a0" stroke-width="1"/>
<text x="1498.00" y="696.30" font-size="11" fill="#4d4d4d" text-anchor="end" >0</text>
<line x1="1501" y1="668.50" x2="1504" y2="668.50" stroke="#a0a0a0" stroke-width="1"/>
<text x="1498.00" y="672.21" font-size="11" fill="#4d4d4d" text-anchor="end" >500</text>
<line x1="1501" y1="644.50" x2="1504" y2="644.50" stroke="#a0a0a0" stroke-width="1"/>
<text x="1498.00" y="648.12" font-size="11" fill="#4d4d4d" text-anchor="end" >1,000</text>
<line x1="1501" y1="620.50" x2="1504" y2="620.50" stroke="#a0a0a0" stroke-width="1"/>
<text x="1498.00" y="624.03" font-size="11" fill="#4d4d4d" text-anchor="end" >1,500</text>
<line x1="1501" y1="595.50" x2="1504" y2="595.50" stroke="#a0a0a0" stroke-width="1"/>
<text x="1498.00" y="599.94" font-size="11" fill="#4d4d4d" text-anchor="end" >2,000</text>
<line x1="1501" y1="571.50" x2="1504" y2="571.50" stroke="#a0a0a0" stroke-width="1"/>
<text x="1498.00" y="575.86" font-size="11" fill="#4d4d4d" text-anchor="end" >2,500</text>
<line x1="1501" y1="547.50" x2="1504" y2="547.50" stroke="#a0a0a0" stroke-width="1"/>
<text x="1498.00" y="551.77" font-size="11" fill="#4d4d4d" text-anchor="end" >3,000</text>
<line x1="1501" y1="523.50" x2="1504" y2="523.50" stroke="#a0a0a0" stroke-width="1"/>
<text x="1498.00" y="527.68" font-size="11" fill="#4d4d4d" text-anchor="end" >3,500</text>
<line x1="1501" y1="499.50" x2="1504" y2="499.50" stroke="#a0a0a0" stroke-width="1"/>
<text x="1498.00" y="503.59" font-size="11" fill="#4d4d4d" text-anchor="end" >4,000</text>
<line x1="1501" y1="475.50" x2="1504" y2="475.50" stroke="#a0a0a0" stroke-width="1"/>
<text x="1498.00" y="479.50" font-size="11" fill="#4d4d4d" text-anchor="end" >4,500</text>
<line x1="1504.50" y1="462" x2="1504.50" y2="693" stroke="#a0a0a0" stroke-width="1"/>
<line x1="1508" y1="696.50" x2="1904" y2="696.50" stroke="#a0a0a0" stroke-width="1"/>
<line x1="1543.50" y1="696.5" x2="1543.50" y2="699.5" stroke="#a0a0a0" stroke-width="1"/>
<text x="1543.90" y="709.70" font-size="11" fill="#4d4d4d" text-anchor="middle" >-1,000</text>
<line x1="1624.50" y1="696.5" x2="1624.50" y2="699.5" stroke="#a0a0a0" stroke-width="1"/>
<text x="1624.85" y="709.70" font-size="11" fill="#4d4d4d" text-anchor="middle" >-500</text>
<line x1="1705.50" y1="696.5" x2="1705.50" y2="699.5" stroke="#a0a0a0" stroke-width="1"/>
<text x="1705.80" y="709.70" font-size="11" fill="#4d4d4d" text-anchor="middle" >0</text>
<line x1="1786.50" y1="696.5" x2="1786.50" y2="699.5" stroke="#a0a0a0" stroke-width="1"/>
<text x="1786.75" y="709.70" font-size="11" fill="#4d4d4d" text-anchor="middle" >500</text>
<line x1="1867.50" y1="696.5" x2="1867.50" y2="699.5" stroke="#a0a0a0" stroke-width="1"/>
<text x="1867.70" y="709.70" font-size="11" fill="#4d4d4d" text-anchor="middle" >1,000</text>
<rect x="1508" y="462.5" width="396" height="230.0" fill="none" stroke="#6e6e6e" stroke-width="1"/>
<polyline points="1525.28,680.74 1526.90,680.74 1528.52,680.74 1530.14,680.74 1531.76,680.74 1533.38,680.74 1535.00,680.74 1536.61,680.74 1538.23,680.74 1539.85,680.74 1541.47,680.74 1543.09,680.74 1544.71,680.74 1546.33,680.74 1547.95,680.74 1549.57,680.74 1551.19,680.74 1552.80,680.74 1554.42,680.74 1556.04,680.74 1557.66,680.74 1559.28,680.74 1560.90,680.74 1562.52,680.74 1564.14,680.74 1565.76,680.74 1567.38,680.74 1568.99,680.74 1570.61,680.74 1572.23,680.74 1573.85,680.74 1575.47,680.74 1577.09,680.74 1578.71,680.74 1580.33,680.74 1581.95,680.74 1583.57,680.74 1585.18,680.74 1586.80,680.74 1588.42,680.74 1590.04,680.74 1591.66,680.74 1593.28,680.74 1594.90,680.74 1596.52,680.74 1598.14,680.74 1599.76,680.74 1601.37,680.74 1602.99,680.74 1604.61,680.74 1606.23,680.74 1607.85,680.73 1609.47,680.73 1611.09,680.73 1612.71,680.73 1614.33,680.73 1615.95,680.72 1617.56,680.72 1619.18,680.71 1620.80,680.70 1622.42,680.68 1624.04,680.66 1625.66,680.63 1627.28,680.60 1628.90,680.55 1630.52,680.48 1632.14,680.40 1633.75,680.29 1635.37,680.15 1636.99,679.97 1638.61,679.74 1640.23,679.45 1641.85,679.09 1643.47,678.63 1645.09,678.08 1646.71,677.39 1648.33,676.55 1649.94,675.54 1651.56,674.32 1653.18,672.86 1654.80,671.13 1656.42,669.10 1658.04,666.72 1659.66,663.96 1661.28,660.78 1662.90,657.14 1664.52,653.01 1666.13,648.36 1667.75,643.17 1669.37,637.41 1670.99,631.08 1672.61,624.17 1674.23,616.71 1675.85,608.70 1677.47,600.20 1679.09,591.24 1680.71,581.91 1682.32,572.28 1683.94,562.44 1685.56,552.51 1687.18,542.61 1688.80,532.86 1690.42,523.40 1692.04,514.37 1693.66,505.91 1695.28,498.16 1696.90,491.24 1698.51,485.27 1700.13,480.36 1701.75,476.60 1703.37,474.05 1704.99,472.77 1706.61,472.77 1708.23,474.05 1709.85,476.60 1711.47,480.36 1713.09,485.27 1714.70,491.24 1716.32,498.16 1717.94,505.91 1719.56,514.37 1721.18,523.40 1722.80,532.86 1724.42,542.61 1726.04,552.51 1727.66,562.44 1729.28,572.28 1730.89,581.91 1732.51,591.24 1734.13,600.20 1735.75,608.70 1737.37,616.71 1738.99,624.17 1740.61,631.08 1742.23,637.41 1743.85,643.17 1745.47,648.36 1747.08,653.01 1748.70,657.14 1750.32,660.78 1751.94,663.96 1753.56,666.72 1755.18,669.10 1756.80,671.13 1758.42,672.86 1760.04,674.32 1761.66,675.54 1763.27,676.55 1764.89,677.39 1766.51,678.08 1768.13,678.63 1769.75,679.09 1771.37,679.45 1772.99,679.74 1774.61,679.97 1776.23,680.15 1777.85,680.29 1779.46,680.40 1781.08,680.48 1782.70,680.55 1784.32,680.60 1785.94,680.63 1787.56,680.66 1789.18,680.68 1790.80,680.70 1792.42,680.71 1794.04,680.72 1795.65,680.72 1797.27,680.73 1798.89,680.73 1800.51,680.73 1802.13,680.73 1803.75,680.73 1805.37,680.74 1806.99,680.74 1808.61,680.74 1810.23,680.74 1811.84,680.74 1813.46,680.74 1815.08,680.74 1816.70,680.74 1818.32,680.74 1819.94,680.74 1821.56,680.74 1823.18,680.74 1824.80,680.74 1826.42,680.74 1828.03,680.74 1829.65,680.74 1831.27,680.74 1832.89,680.74 1834.51,680.74 1836.13,680.74 1837.75,680.74 1839.37,680.74 1840.99,680.74 1842.61,680.74 1844.22,680.74 1845.84,680.74 1847.46,680.74 1849.08,680.74 1850.70,680.74 1852.32,680.74 1853.94,680.74 1855.56,680.74 1857.18,680.74 1858.80,680.74 1860.41,680.74 1862.03,680.74 1863.65,680.74 1865.27,680.74 1866.89,680.74 1868.51,680.74 1870.13,680.74 1871.75,680.74 1873.37,680.74 1874.99,680.74 1876.60,680.74 1878.22,680.74 1879.84,680.74 1881.46,680.74 1883.08,680.74 1884.70,680.74" fill="none" stroke="#1b5ea6" stroke-width="2" stroke-linejoin="miter"/>
<line x1="1767.5" y1="472.00" x2="1782.0" y2="472.00" stroke="#2f7fc0" stroke-width="1.2"/>
<text x="1786.00" y="476.00" font-size="11" fill="#333" text-anchor="start" >Profile</text>
<line x1="1822" y1="472.00" x2="1836.5" y2="472.00" stroke="#e04848" stroke-width="1.2"/>
<text x="1841.00" y="476.00" font-size="11" fill="#333" text-anchor="start" >Gaussian fit</text>
<text x="1705.80" y="726.60" font-size="12" fill="#4d4d4d" text-anchor="middle" >Radius (µm)</text>
<text x="1463.30" y="579.00" font-size="12" fill="#4d4d4d" text-anchor="middle" transform="rotate(-90 1463.3 579)">Y intensity (arb. unit)</text>
<line x1="64.5" y1="788.50" x2="894.5" y2="788.50" stroke="#b4b4b4" stroke-width="1" stroke-dasharray="2 2"/>
<line x1="57.5" y1="788.50" x2="60.5" y2="788.50" stroke="#a0a0a0" stroke-width="1"/>
<text x="54.00" y="792.90" font-size="11" fill="#4d4d4d" text-anchor="end" >860</text>
<line x1="64.5" y1="816.50" x2="894.5" y2="816.50" stroke="#b4b4b4" stroke-width="1" stroke-dasharray="2 2"/>
<line x1="57.5" y1="816.50" x2="60.5" y2="816.50" stroke="#a0a0a0" stroke-width="1"/>
<text x="54.00" y="820.20" font-size="11" fill="#4d4d4d" text-anchor="end" >855</text>
<line x1="64.5" y1="843.50" x2="894.5" y2="843.50" stroke="#b4b4b4" stroke-width="1" stroke-dasharray="2 2"/>
<line x1="57.5" y1="843.50" x2="60.5" y2="843.50" stroke="#a0a0a0" stroke-width="1"/>
<text x="54.00" y="847.50" font-size="11" fill="#4d4d4d" text-anchor="end" >850</text>
<line x1="64.5" y1="870.50" x2="894.5" y2="870.50" stroke="#b4b4b4" stroke-width="1" stroke-dasharray="2 2"/>
<line x1="57.5" y1="870.50" x2="60.5" y2="870.50" stroke="#a0a0a0" stroke-width="1"/>
<text x="54.00" y="874.80" font-size="11" fill="#4d4d4d" text-anchor="end" >845</text>
<line x1="64.5" y1="898.50" x2="894.5" y2="898.50" stroke="#b4b4b4" stroke-width="1" stroke-dasharray="2 2"/>
<line x1="57.5" y1="898.50" x2="60.5" y2="898.50" stroke="#a0a0a0" stroke-width="1"/>
<text x="54.00" y="902.10" font-size="11" fill="#4d4d4d" text-anchor="end" >840</text>
<line x1="64.5" y1="925.50" x2="894.5" y2="925.50" stroke="#b4b4b4" stroke-width="1" stroke-dasharray="2 2"/>
<line x1="57.5" y1="925.50" x2="60.5" y2="925.50" stroke="#a0a0a0" stroke-width="1"/>
<text x="54.00" y="929.40" font-size="11" fill="#4d4d4d" text-anchor="end" >835</text>
<line x1="64.5" y1="952.50" x2="894.5" y2="952.50" stroke="#b4b4b4" stroke-width="1" stroke-dasharray="2 2"/>
<line x1="57.5" y1="952.50" x2="60.5" y2="952.50" stroke="#a0a0a0" stroke-width="1"/>
<text x="54.00" y="956.70" font-size="11" fill="#4d4d4d" text-anchor="end" >830</text>
<line x1="64.5" y1="980.50" x2="894.5" y2="980.50" stroke="#b4b4b4" stroke-width="1" stroke-dasharray="2 2"/>
<line x1="57.5" y1="980.50" x2="60.5" y2="980.50" stroke="#a0a0a0" stroke-width="1"/>
<text x="54.00" y="984.00" font-size="11" fill="#4d4d4d" text-anchor="end" >825</text>
<line x1="64.5" y1="1007.50" x2="894.5" y2="1007.50" stroke="#b4b4b4" stroke-width="1" stroke-dasharray="2 2"/>
<line x1="57.5" y1="1007.50" x2="60.5" y2="1007.50" stroke="#a0a0a0" stroke-width="1"/>
<text x="54.00" y="1011.30" font-size="11" fill="#4d4d4d" text-anchor="end" >820</text>
<line x1="60.50" y1="780" x2="60.50" y2="1025" stroke="#a0a0a0" stroke-width="1"/>
<line x1="898.50" y1="780" x2="898.50" y2="1025" stroke="#a0a0a0" stroke-width="1"/>
<line x1="898.5" y1="803.50" x2="901.5" y2="803.50" stroke="#a0a0a0" stroke-width="1"/>
<text x="903.90" y="807.90" font-size="11" fill="#4d4d4d" text-anchor="start" >30.3</text>
<line x1="898.5" y1="828.50" x2="901.5" y2="828.50" stroke="#a0a0a0" stroke-width="1"/>
<text x="903.90" y="832.30" font-size="11" fill="#4d4d4d" text-anchor="start" >30.2</text>
<line x1="898.5" y1="852.50" x2="901.5" y2="852.50" stroke="#a0a0a0" stroke-width="1"/>
<text x="903.90" y="856.70" font-size="11" fill="#4d4d4d" text-anchor="start" >30.1</text>
<line x1="898.5" y1="877.50" x2="901.5" y2="877.50" stroke="#a0a0a0" stroke-width="1"/>
<text x="903.90" y="881.10" font-size="11" fill="#4d4d4d" text-anchor="start" >30.0</text>
<line x1="898.5" y1="901.50" x2="901.5" y2="901.50" stroke="#a0a0a0" stroke-width="1"/>
<text x="903.90" y="905.50" font-size="11" fill="#4d4d4d" text-anchor="start" >29.9</text>
<line x1="898.5" y1="925.50" x2="901.5" y2="925.50" stroke="#a0a0a0" stroke-width="1"/>
<text x="903.90" y="929.90" font-size="11" fill="#4d4d4d" text-anchor="start" >29.8</text>
<line x1="898.5" y1="950.50" x2="901.5" y2="950.50" stroke="#a0a0a0" stroke-width="1"/>
<text x="903.90" y="954.30" font-size="11" fill="#4d4d4d" text-anchor="start" >29.7</text>
<line x1="898.5" y1="974.50" x2="901.5" y2="974.50" stroke="#a0a0a0" stroke-width="1"/>
<text x="903.90" y="978.70" font-size="11" fill="#4d4d4d" text-anchor="start" >29.6</text>
<line x1="898.5" y1="999.50" x2="901.5" y2="999.50" stroke="#a0a0a0" stroke-width="1"/>
<text x="903.90" y="1003.10" font-size="11" fill="#4d4d4d" text-anchor="start" >29.5</text>
<line x1="898.5" y1="1023.50" x2="901.5" y2="1023.50" stroke="#a0a0a0" stroke-width="1"/>
<text x="903.90" y="1027.50" font-size="11" fill="#4d4d4d" text-anchor="start" >29.4</text>
<rect x="64.5" y="780.5" width="830.0" height="244.0" fill="none" stroke="#6e6e6e" stroke-width="1"/>
<line x1="92" y1="902.00" x2="856" y2="902.00" stroke="#e38c84" stroke-width="2.2"/>
<polyline points="92.30,931.30 120.57,883.90 148.84,824.60 177.11,920.80 205.38,888.20 233.65,963.40 261.92,886.80 290.19,912.90 318.46,825.80 346.73,819.00 375.00,888.80 403.27,918.00 431.54,799.70 459.81,969.90 488.08,952.80 516.35,943.40 544.62,881.00 572.89,930.10 601.16,956.20 629.43,974.00 657.70,984.00 685.97,970.40 714.24,923.60 742.51,935.50 770.78,906.00 799.05,1003.80 827.32,931.50 855.59,982.30" fill="none" stroke="#2a7ab8" stroke-width="1.2" stroke-linejoin="miter"/>
<line x1="706.8" y1="790.30" x2="721.3" y2="790.30" stroke="#2f7fc0" stroke-width="1.2"/>
<text x="725.00" y="794.30" font-size="11" fill="#333" text-anchor="start" >Intensity</text>
<line x1="773" y1="790.30" x2="787.5" y2="790.30" stroke="#e04848" stroke-width="1.2"/>
<text x="792.00" y="794.30" font-size="11" fill="#333" text-anchor="start" >Sensor temperature</text>
<text x="28.10" y="902.40" font-size="12" fill="#4d4d4d" text-anchor="middle" transform="rotate(-90 28.1 902.4)">Intensity</text>
<text x="932.50" y="902.30" font-size="12" fill="#4d4d4d" text-anchor="middle" transform="rotate(90 932.5 902.3)">Sensor temperature (°C)</text>
<line x1="1019.5" y1="800.50" x2="1866.5" y2="800.50" stroke="#b4b4b4" stroke-width="1" stroke-dasharray="2 2"/>
<line x1="1012.6" y1="800.50" x2="1015.6" y2="800.50" stroke="#a0a0a0" stroke-width="1"/>
<text x="1008.80" y="804.20" font-size="11" fill="#4d4d4d" text-anchor="end" >69</text>
<line x1="1019.5" y1="823.50" x2="1866.5" y2="823.50" stroke="#b4b4b4" stroke-width="1" stroke-dasharray="2 2"/>
<line x1="1012.6" y1="823.50" x2="1015.6" y2="823.50" stroke="#a0a0a0" stroke-width="1"/>
<text x="1008.80" y="827.12" font-size="11" fill="#4d4d4d" text-anchor="end" >68</text>
<line x1="1019.5" y1="846.50" x2="1866.5" y2="846.50" stroke="#b4b4b4" stroke-width="1" stroke-dasharray="2 2"/>
<line x1="1012.6" y1="846.50" x2="1015.6" y2="846.50" stroke="#a0a0a0" stroke-width="1"/>
<text x="1008.80" y="850.04" font-size="11" fill="#4d4d4d" text-anchor="end" >67</text>
<line x1="1019.5" y1="868.50" x2="1866.5" y2="868.50" stroke="#b4b4b4" stroke-width="1" stroke-dasharray="2 2"/>
<line x1="1012.6" y1="868.50" x2="1015.6" y2="868.50" stroke="#a0a0a0" stroke-width="1"/>
<text x="1008.80" y="872.96" font-size="11" fill="#4d4d4d" text-anchor="end" >66</text>
<line x1="1019.5" y1="891.50" x2="1866.5" y2="891.50" stroke="#b4b4b4" stroke-width="1" stroke-dasharray="2 2"/>
<line x1="1012.6" y1="891.50" x2="1015.6" y2="891.50" stroke="#a0a0a0" stroke-width="1"/>
<text x="1008.80" y="895.88" font-size="11" fill="#4d4d4d" text-anchor="end" >65</text>
<line x1="1019.5" y1="914.50" x2="1866.5" y2="914.50" stroke="#b4b4b4" stroke-width="1" stroke-dasharray="2 2"/>
<line x1="1012.6" y1="914.50" x2="1015.6" y2="914.50" stroke="#a0a0a0" stroke-width="1"/>
<text x="1008.80" y="918.80" font-size="11" fill="#4d4d4d" text-anchor="end" >64</text>
<line x1="1019.5" y1="937.50" x2="1866.5" y2="937.50" stroke="#b4b4b4" stroke-width="1" stroke-dasharray="2 2"/>
<line x1="1012.6" y1="937.50" x2="1015.6" y2="937.50" stroke="#a0a0a0" stroke-width="1"/>
<text x="1008.80" y="941.72" font-size="11" fill="#4d4d4d" text-anchor="end" >63</text>
<line x1="1019.5" y1="960.50" x2="1866.5" y2="960.50" stroke="#b4b4b4" stroke-width="1" stroke-dasharray="2 2"/>
<line x1="1012.6" y1="960.50" x2="1015.6" y2="960.50" stroke="#a0a0a0" stroke-width="1"/>
<text x="1008.80" y="964.64" font-size="11" fill="#4d4d4d" text-anchor="end" >62</text>
<line x1="1019.5" y1="983.50" x2="1866.5" y2="983.50" stroke="#b4b4b4" stroke-width="1" stroke-dasharray="2 2"/>
<line x1="1012.6" y1="983.50" x2="1015.6" y2="983.50" stroke="#a0a0a0" stroke-width="1"/>
<text x="1008.80" y="987.56" font-size="11" fill="#4d4d4d" text-anchor="end" >61</text>
<line x1="1019.5" y1="1006.50" x2="1866.5" y2="1006.50" stroke="#b4b4b4" stroke-width="1" stroke-dasharray="2 2"/>
<line x1="1012.6" y1="1006.50" x2="1015.6" y2="1006.50" stroke="#a0a0a0" stroke-width="1"/>
<text x="1008.80" y="1010.48" font-size="11" fill="#4d4d4d" text-anchor="end" >60</text>
<line x1="1015.50" y1="781" x2="1015.50" y2="1025" stroke="#a0a0a0" stroke-width="1"/>
<line x1="1870.50" y1="781" x2="1870.50" y2="1025" stroke="#a0a0a0" stroke-width="1"/>
<line x1="1870.4" y1="795.50" x2="1873.4" y2="795.50" stroke="#a0a0a0" stroke-width="1"/>
<text x="1875.20" y="799.40" font-size="11" fill="#4d4d4d" text-anchor="start" >1</text>
<line x1="1870.4" y1="819.50" x2="1873.4" y2="819.50" stroke="#a0a0a0" stroke-width="1"/>
<text x="1875.20" y="823.03" font-size="11" fill="#4d4d4d" text-anchor="start" >0</text>
<line x1="1870.4" y1="842.50" x2="1873.4" y2="842.50" stroke="#a0a0a0" stroke-width="1"/>
<text x="1875.20" y="846.66" font-size="11" fill="#4d4d4d" text-anchor="start" >-1</text>
<line x1="1870.4" y1="866.50" x2="1873.4" y2="866.50" stroke="#a0a0a0" stroke-width="1"/>
<text x="1875.20" y="870.29" font-size="11" fill="#4d4d4d" text-anchor="start" >-2</text>
<line x1="1870.4" y1="889.50" x2="1873.4" y2="889.50" stroke="#a0a0a0" stroke-width="1"/>
<text x="1875.20" y="893.92" font-size="11" fill="#4d4d4d" text-anchor="start" >-3</text>
<line x1="1870.4" y1="913.50" x2="1873.4" y2="913.50" stroke="#a0a0a0" stroke-width="1"/>
<text x="1875.20" y="917.55" font-size="11" fill="#4d4d4d" text-anchor="start" >-4</text>
<line x1="1870.4" y1="937.50" x2="1873.4" y2="937.50" stroke="#a0a0a0" stroke-width="1"/>
<text x="1875.20" y="941.18" font-size="11" fill="#4d4d4d" text-anchor="start" >-5</text>
<line x1="1870.4" y1="960.50" x2="1873.4" y2="960.50" stroke="#a0a0a0" stroke-width="1"/>
<text x="1875.20" y="964.81" font-size="11" fill="#4d4d4d" text-anchor="start" >-6</text>
<line x1="1870.4" y1="984.50" x2="1873.4" y2="984.50" stroke="#a0a0a0" stroke-width="1"/>
<text x="1875.20" y="988.44" font-size="11" fill="#4d4d4d" text-anchor="start" >-7</text>
<line x1="1870.4" y1="1008.50" x2="1873.4" y2="1008.50" stroke="#a0a0a0" stroke-width="1"/>
<text x="1875.20" y="1012.07" font-size="11" fill="#4d4d4d" text-anchor="start" >-8</text>
<rect x="1019.5" y="781.5" width="847.0" height="243.0" fill="none" stroke="#6e6e6e" stroke-width="1"/>
<polyline points="1047.90,920.80 1076.76,933.00 1105.62,971.00 1134.48,986.90 1163.34,882.50 1192.20,808.80 1221.06,803.10 1249.92,809.30 1278.78,869.80 1307.64,1003.70 1336.50,995.40 1365.36,922.20 1394.22,897.30 1423.08,854.00 1451.94,813.00 1480.80,938.60 1509.66,935.00 1538.52,940.00 1567.38,859.20 1596.24,915.10 1625.10,828.60 1653.96,825.20 1682.82,801.10 1711.68,827.20 1740.54,870.60 1769.40,936.90 1798.26,825.20 1827.12,930.70" fill="none" stroke="#f2c33a" stroke-width="1.2" stroke-linejoin="miter"/>
<polyline points="1047.90,1003.70 1076.76,969.30 1105.62,977.60 1134.48,945.80 1163.34,993.70 1192.20,954.90 1221.06,900.40 1249.92,981.20 1278.78,995.40 1307.64,973.90 1336.50,820.10 1365.36,967.60 1394.22,800.80 1423.08,843.30 1451.94,992.50 1480.80,813.00 1509.66,964.70 1538.52,926.40 1567.38,830.60 1596.24,852.70 1625.10,866.90 1653.96,830.90 1682.82,1003.00 1711.68,969.80 1740.54,813.80 1769.40,869.70 1798.26,862.10 1827.12,997.30" fill="none" stroke="#2a86c4" stroke-width="1.2" stroke-linejoin="miter"/>
<line x1="1715" y1="791.20" x2="1729.5" y2="791.20" stroke="#2f7fc0" stroke-width="1.2"/>
<text x="1733.00" y="795.20" font-size="11" fill="#333" text-anchor="start" >Intensity X</text>
<line x1="1792" y1="791.20" x2="1806.5" y2="791.20" stroke="#f2c33a" stroke-width="1.2"/>
<text x="1810.00" y="795.20" font-size="11" fill="#333" text-anchor="start" >Intensity Y</text>
<text x="989.00" y="902.40" font-size="12" fill="#4d4d4d" text-anchor="middle" transform="rotate(-90 989 902.4)">X (µm)</text>
<text x="1893.90" y="902.30" font-size="12" fill="#4d4d4d" text-anchor="middle" transform="rotate(90 1893.9 902.3)">Y (µm)</text>
</svg>
</body></html>
